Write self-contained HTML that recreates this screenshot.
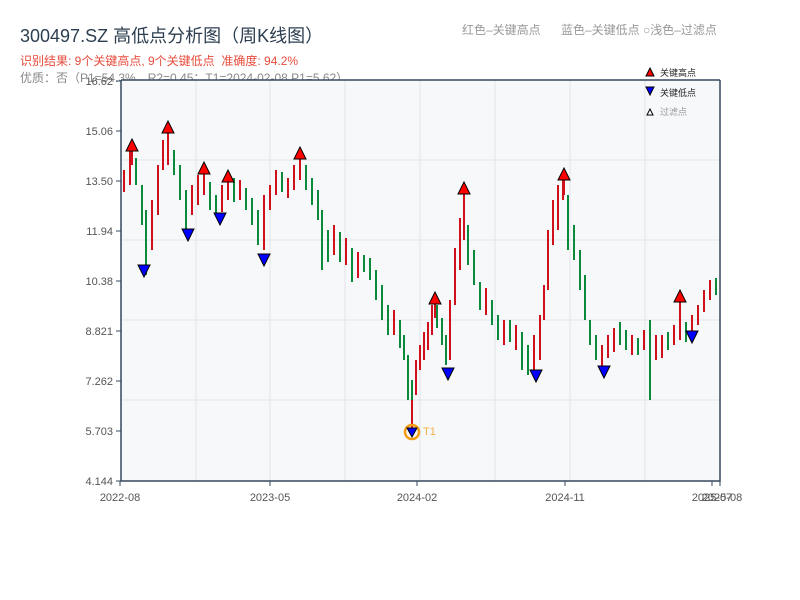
<!DOCTYPE html>
<html><head><meta charset="utf-8"><style>
body{margin:0;width:800px;height:600px;background:#fff;overflow:hidden;font-family:"Liberation Sans","Noto Sans CJK SC",sans-serif;position:relative}
.t{position:absolute;white-space:nowrap}
svg text{font-family:"Liberation Sans","Noto Sans CJK SC",sans-serif}
</style></head><body>
<div class="t" style="left:20px;top:22px;font-size:18px;color:#2c3e50">300497.SZ 高低点分析图（周K线图）</div>
<div class="t" style="left:20px;top:52px;font-size:12px;color:#e74c3c">识别结果: 9个关键高点, 9个关键低点&nbsp;&nbsp;准确度: 94.2%</div>
<div class="t" style="left:20px;top:69px;font-size:12px;color:#888">优质：否（P1=54.3%，R2=0.45；T1=2024-02-08 P1=5.62）</div>
<div class="t" style="left:462px;top:21px;font-size:12px;color:#999">红色–关键高点</div>
<div class="t" style="left:561px;top:21px;font-size:12px;color:#999">蓝色–关键低点 ○浅色–过滤点</div>
<svg width="800" height="600" style="position:absolute;left:0;top:0">
<rect x="121" y="80" width="599" height="401" fill="#f7f8fa"/>
<g stroke="#e1e4ea">
<line x1="196" y1="80" x2="196" y2="481"/><line x1="270" y1="80" x2="270" y2="481"/><line x1="345" y1="80" x2="345" y2="481"/><line x1="420" y1="80" x2="420" y2="481"/><line x1="495" y1="80" x2="495" y2="481"/><line x1="570" y1="80" x2="570" y2="481"/><line x1="645" y1="80" x2="645" y2="481"/>
<line x1="121" y1="160" x2="720" y2="160"/><line x1="121" y1="240" x2="720" y2="240"/><line x1="121" y1="320" x2="720" y2="320"/><line x1="121" y1="400" x2="720" y2="400"/>
</g>
<g stroke="#34495e">
<line x1="116" y1="81" x2="121" y2="81"/><line x1="116" y1="131" x2="121" y2="131"/><line x1="116" y1="181" x2="121" y2="181"/><line x1="116" y1="231" x2="121" y2="231"/><line x1="116" y1="281" x2="121" y2="281"/><line x1="116" y1="331" x2="121" y2="331"/><line x1="116" y1="381" x2="121" y2="381"/><line x1="116" y1="431" x2="121" y2="431"/><line x1="116" y1="481" x2="121" y2="481"/>
<line x1="120" y1="481" x2="120" y2="486"/><line x1="270" y1="481" x2="270" y2="486"/><line x1="417" y1="481" x2="417" y2="486"/><line x1="565" y1="481" x2="565" y2="486"/><line x1="712" y1="481" x2="712" y2="486"/><line x1="720" y1="481" x2="720" y2="486"/>
</g>
<g font-size="11" fill="#555" text-anchor="end">
<text x="113" y="85">16.62</text><text x="113" y="135">15.06</text><text x="113" y="185">13.50</text><text x="113" y="235">11.94</text><text x="113" y="285">10.38</text><text x="113" y="335">8.821</text><text x="113" y="385">7.262</text><text x="113" y="435">5.703</text><text x="113" y="485">4.144</text>
</g>
<g font-size="11" fill="#555" text-anchor="middle">
<text x="120" y="501">2022-08</text><text x="270" y="501">2023-05</text><text x="417" y="501">2024-02</text><text x="565" y="501">2024-11</text><text x="712" y="501">2025-07</text><text x="722" y="501">2025-08</text>
</g>
<path stroke="#d0101a" stroke-width="2" fill="none" d="M124 170V192M130 150V185M152 200V250M158 165V215M163 140V170M168 135V165M192 185V215M198 175V205M204 165V195M222 185V212M228 180V200M240 180V200M264 195V250M270 185V210M276 170V195M288 178V198M294 165V190M300 158V180M334 225V255M346 238V265M358 252V278M394 310V335M416 360V395M420 345V370M424 332V360M428 322V350M432 305V335M450 300V360M455 248V305M460 218V270M464 195V240M486 288V315M504 320V345M516 325V350M534 335V370M540 315V360M544 285V320M548 230V290M553 200V245M558 185V230M563 175V200M602 345V370M608 335V358M614 328V352M632 335V355M644 330V350M656 335V360M662 335V358M674 325V345M680 315V340M692 315V335M698 305V325M704 290V312M710 280V300"/>
<path stroke="#0a8a3a" stroke-width="2" fill="none" d="M136 158V185M142 185V225M146 210V275M174 150V175M180 165V200M186 190V230M210 182V210M216 195V215M234 178V202M246 188V210M252 198V225M258 210V245M282 172V192M306 165V190M312 178V205M318 190V220M322 210V270M328 230V262M340 232V262M352 248V282M364 255V272M370 258V280M376 270V300M382 285V320M388 305V335M400 320V348M404 335V360M408 355V400M412 380V412M437 305V328M442 318V345M446 335V365M468 225V265M474 250V285M480 282V310M492 300V325M498 315V340M510 320V342M522 332V370M528 345V375M568 195V250M574 225V260M580 250V290M585 275V320M590 320V345M596 335V360M620 322V345M626 330V350M638 338V355M650 320V400M668 332V350M686 322V342M716 278V295"/>
<path stroke="#34495e" stroke-width="1.5" fill="none" d="M121 80V481H720V80M121 80H720"/>
<g stroke="#d0101a" stroke-width="2">
<line x1="132" y1="151" x2="132" y2="165"/><line x1="168" y1="133" x2="168" y2="147"/><line x1="204" y1="174" x2="204" y2="185"/><line x1="228" y1="182" x2="228" y2="195"/><line x1="300" y1="159" x2="300" y2="170"/><line x1="435" y1="304" x2="435" y2="318"/><line x1="464" y1="194" x2="464" y2="210"/><line x1="564" y1="180" x2="564" y2="195"/><line x1="680" y1="302" x2="680" y2="316"/><line x1="412" y1="400" x2="412" y2="428"/>
</g>
<g fill="#f00" stroke="#000">
<polygon points="126,151 138,151 132,139"/><polygon points="162,133 174,133 168,121"/><polygon points="198,174 210,174 204,162"/><polygon points="222,182 234,182 228,170"/><polygon points="294,159 306,159 300,147"/><polygon points="429,304 441,304 435,292"/><polygon points="458,194 470,194 464,182"/><polygon points="558,180 570,180 564,168"/><polygon points="674,302 686,302 680,290"/>
</g>
<g fill="#00f" stroke="#000">
<polygon points="138,265 150,265 144,277"/><polygon points="182,229 194,229 188,241"/><polygon points="214,213 226,213 220,225"/><polygon points="258,254 270,254 264,266"/><polygon points="442,368 454,368 448,380"/><polygon points="530,370 542,370 536,382"/><polygon points="598,366 610,366 604,378"/><polygon points="686,331 698,331 692,343"/>
</g>
<circle cx="412" cy="432" r="7" fill="none" stroke="#f39c12" stroke-width="2.5"/>
<polygon points="407,428 417,428 412,437" fill="#00f" stroke="#000"/>
<text x="423" y="435" font-size="11" fill="#f5b041">T1</text>
<polygon points="646,76 654,76 650,68" fill="#f00" stroke="#000"/><text x="660" y="76" font-size="9" fill="#222">关键高点</text>
<polygon points="646,87 654,87 650,95" fill="#00f" stroke="#000"/><text x="660" y="96" font-size="9" fill="#222">关键低点</text>
<polygon points="647,115 653,115 650,109" fill="#fff" stroke="#000"/><text x="660" y="115" font-size="9" fill="#999">过滤点</text>
</svg>
</body></html>
